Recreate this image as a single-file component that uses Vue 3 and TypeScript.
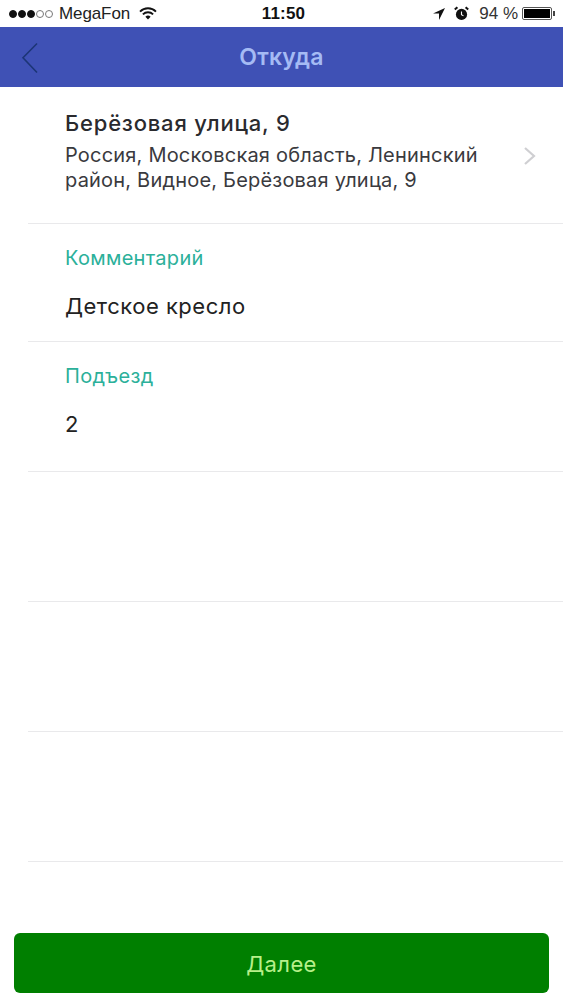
<script setup lang="ts">
const emptyRows = [1, 2, 3]
</script>

<template>
  <div class="screen">
    <div class="status">
      <div class="status-left">
        <span class="signal">
          <i class="dot on"></i><i class="dot on"></i><i class="dot on"></i><i class="dot"></i><i class="dot"></i>
        </span>
        <span class="carrier">MegaFon</span>
        <svg class="wifi" width="18" height="13" viewBox="0 0 18 13">
          <path d="M1 4.6a11.4 11.4 0 0 1 16 0" fill="none" stroke="#111" stroke-width="1.9" />
          <path d="M3.9 7.4a7.3 7.3 0 0 1 10.2 0" fill="none" stroke="#111" stroke-width="1.9" />
          <path d="M6.4 9.7a3.7 3.7 0 0 1 5.2 0L9 12.4z" fill="#111" />
        </svg>
      </div>
      <span class="time">11:50</span>
      <div class="status-right">
        <svg width="12" height="12" viewBox="0 0 12 12"><path d="M12 0 0 5.4h6V12z" fill="#111" /></svg>
        <svg class="alarm" width="15" height="15" viewBox="0 0 15 15">
          <circle cx="7.5" cy="8.4" r="5.6" fill="#111" />
          <path d="M7.5 5.5v3.2l2 1.2" fill="none" stroke="#fff" stroke-width="1.1" />
          <path d="M.8 3.6 3.4 1.2M14.2 3.6 11.6 1.2" stroke="#111" stroke-width="2" />
        </svg>
        <span class="battery-text">94 %</span>
        <span class="battery"><i class="battery-fill"></i></span>
        <i class="battery-tip"></i>
      </div>
    </div>

    <header class="navbar">
      <svg class="back" width="18" height="32" viewBox="0 0 18 32">
        <path d="M16 1.5 2 15.8 16 30.5" fill="none" stroke="#1c3576" stroke-width="1.6" />
      </svg>
      <h1 class="title">Откуда</h1>
    </header>

    <section class="address">
      <div class="address-text">
        <div class="address-name">Берёзовая улица, 9</div>
        <div class="address-full">Россия, Московская область, Ленинский район, Видное, Берёзовая улица, 9</div>
      </div>
      <svg class="chevron" width="14" height="20" viewBox="0 0 14 20">
        <path d="M2 2l9 8-9 8" fill="none" stroke="#cfcfd2" stroke-width="2.2" />
      </svg>
    </section>

    <section class="field field-comment">
      <div class="field-label">Комментарий</div>
      <div class="field-value">Детское кресло</div>
    </section>

    <section class="field field-entrance">
      <div class="field-label">Подъезд</div>
      <div class="field-value">2</div>
    </section>

    <div v-for="row in emptyRows" :key="row" class="empty-row"></div>

    <div class="footer">
      <button class="next" type="button">Далее</button>
    </div>
  </div>
</template>

<style scoped>
.screen {
  width: 563px;
  height: 1000px;
  display: flex;
  flex-direction: column;
  overflow: hidden;
  background: #fff;
  font-family: "Inter", "Liberation Sans", sans-serif;
  color: #2a2a2e;
}

.status {
  height: 27px;
  display: grid;
  grid-template-columns: 1fr auto 1fr;
  align-items: center;
  padding: 0 8px 0 9px;
  font-family: "Liberation Sans", sans-serif;
  font-size: 16px;
  color: #222;
}

.status-left,
.status-right {
  display: flex;
  align-items: center;
}

.status-right {
  justify-content: flex-end;
}

.signal {
  display: flex;
  gap: 1px;
}

.dot {
  width: 8px;
  height: 8px;
  border-radius: 50%;
  border: 1px solid #777;
  box-sizing: border-box;
}

.dot.on {
  background: #111;
  border-color: #111;
}

.carrier {
  margin-left: 6px;
  font-size: 17px;
  letter-spacing: -0.1px;
}

.wifi {
  margin-left: 9px;
}

.time {
  margin-left: 3px;
  font-weight: 700;
  font-size: 17px;
  letter-spacing: 0.2px;
  color: #111;
}

.alarm {
  margin-left: 9px;
}

.battery-text {
  margin-left: 10px;
  font-size: 17px;
  color: #333;
}

.battery {
  margin-left: 4px;
  width: 30px;
  height: 13px;
  padding: 1px;
  box-sizing: border-box;
  border: 1px solid #555;
  border-radius: 2px;
}

.battery-fill {
  display: block;
  height: 100%;
  width: 100%;
  background: #000;
}

.battery-tip {
  width: 2px;
  height: 5px;
  background: #444;
  margin-left: 1px;
}

.navbar {
  height: 60px;
  background: #3f51b5;
  display: flex;
  align-items: center;
  justify-content: center;
  position: relative;
}

.back {
  position: absolute;
  left: 21px;
  top: 15px;
}

.title {
  margin: 0;
  font-size: 23px;
  font-weight: 600;
  letter-spacing: 0.2px;
  color: #a5bbf4;
}

.address {
  height: 137px;
  margin-left: 28px;
  padding: 21px 26px 0 37px;
  box-sizing: border-box;
  border-bottom: 1px solid #e9e9eb;
  display: flex;
  justify-content: space-between;
}

.address-text {
  width: 430px;
}

.address-name {
  font-size: 22px;
  font-weight: 500;
  line-height: 30px;
  letter-spacing: 0.8px;
}

.address-full {
  margin-top: 5px;
  font-size: 20px;
  line-height: 25px;
  letter-spacing: 0.2px;
  color: #3a3a3e;
}

.chevron {
  margin-top: 38px;
}

.field {
  margin-left: 28px;
  padding-left: 37px;
  box-sizing: border-box;
  border-bottom: 1px solid #e9e9eb;
}

.field-comment {
  height: 118px;
  padding-top: 21px;
}

.field-entrance {
  height: 130px;
  padding-top: 21px;
}

.field-label {
  font-size: 20px;
  line-height: 26px;
  letter-spacing: 0.3px;
  color: #2bb09a;
}

.field-value {
  margin-top: 21px;
  font-size: 22px;
  line-height: 28px;
  letter-spacing: 0.5px;
  color: #222;
}

.empty-row {
  height: 130px;
  margin-left: 28px;
  box-sizing: border-box;
  border-bottom: 1px solid #e9e9eb;
}

.footer {
  padding: 71px 14px 0 14px;
}

.next {
  display: block;
  width: 100%;
  height: 60px;
  padding-top: 2px;
  border: 0;
  border-radius: 6px;
  background: #007f00;
  color: #b7f08a;
  font-family: inherit;
  font-size: 22px;
  letter-spacing: 0.4px;
}
</style>

<style>
body {
  margin: 0;
  background: #fff;
}
</style>
